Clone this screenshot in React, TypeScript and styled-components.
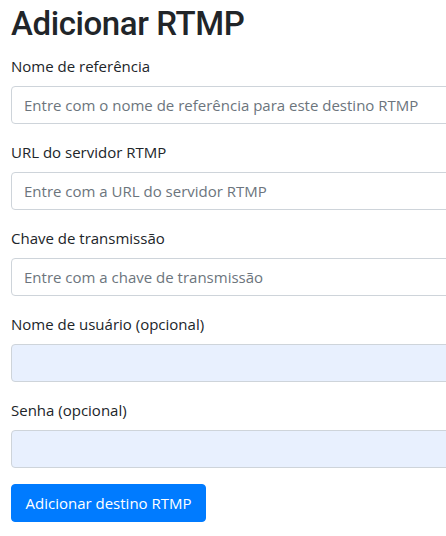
import styled, { createGlobalStyle } from "styled-components";

const GlobalStyle = createGlobalStyle`
  html, body {
    margin: 0;
    padding: 0;
    overflow: hidden;
    background: #fff;
  }
  body {
    font-family: "Open Sans", "Noto Sans", sans-serif;
    color: #212529;
  }
`;

const Page = styled.div`
  width: 520px;
  padding: 0 11px;
  box-sizing: border-box;
`;

const Title = styled.h1`
  margin: 0 0 6px;
  font-family: Roboto, "Open Sans", sans-serif;
  font-size: 33px;
  font-weight: 500;
  line-height: 48px;
  letter-spacing: -0.4px;
`;

const Group = styled.div`
  margin-bottom: 16px;
`;

const Label = styled.label`
  display: block;
  margin-bottom: 8px;
  font-size: 15px;
  line-height: 24px;
`;

const Input = styled.input<{ $filled?: boolean }>`
  display: block;
  width: 100%;
  height: 38px;
  box-sizing: border-box;
  padding: 6px 12px;
  font: inherit;
  font-size: 15px;
  color: #495057;
  background: ${(p) => (p.$filled ? "#e8f0fe" : "#fff")};
  border: 1px solid #ced4da;
  border-radius: 4px;
  outline: none;

  &::placeholder {
    color: #6c757d;
    opacity: 1;
  }
`;

const Button = styled.button`
  display: inline-block;
  height: 38px;
  padding: 6px 13.5px;
  font: inherit;
  font-size: 15px;
  line-height: 24px;
  color: #fff;
  background: #007bff;
  border: 1px solid #007bff;
  border-radius: 4px;
`;

const fields = [
  { label: "Nome de referência", placeholder: "Entre com o nome de referência para este destino RTMP" },
  { label: "URL do servidor RTMP", placeholder: "Entre com a URL do servidor RTMP" },
  { label: "Chave de transmissão", placeholder: "Entre com a chave de transmissão" },
  { label: "Nome de usuário (opcional)", placeholder: "", filled: true },
  { label: "Senha (opcional)", placeholder: "", filled: true },
];

export default function App() {
  return (
    <>
      <GlobalStyle />
      <Page>
        <Title>Adicionar RTMP</Title>
        <form onSubmit={(e) => e.preventDefault()}>
          {fields.map((f) => (
            <Group key={f.label}>
              <Label>{f.label}</Label>
              <Input type="text" placeholder={f.placeholder} $filled={f.filled} />
            </Group>
          ))}
          <Button type="submit">Adicionar destino RTMP</Button>
        </form>
      </Page>
    </>
  );
}
